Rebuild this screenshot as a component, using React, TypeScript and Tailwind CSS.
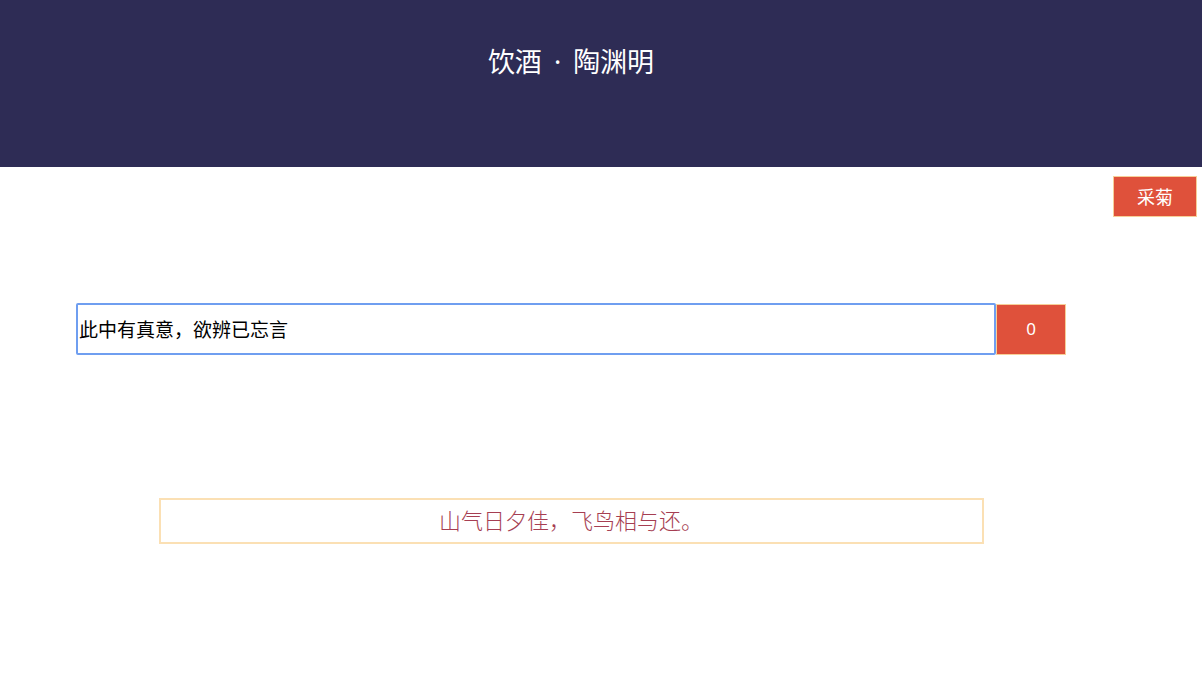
export default function App() {
  return (
    <div className="min-h-[690px] bg-white" style={{ fontFamily: '"Noto Sans", "Noto Sans CJK SC", sans-serif' }}>
      <header className="h-[167px] bg-[#2e2c55]">
        <h1 className="w-[1142px] pt-[44px] text-center text-[27px] leading-[36px] font-normal text-white">
          饮酒<span className="mx-[12px]">·</span>陶渊明
        </h1>
      </header>

      <div className="flex justify-end pr-[5px] pt-[9px]">
        <button className="w-[84px] h-[41px] bg-[#df513b] border border-[#f7cf98] text-white text-[18px] leading-none">
          采菊
        </button>
      </div>

      <div className="w-[1142px] flex flex-col items-center">
        <div className="mt-[86px] flex items-center">
          <input
            defaultValue="此中有真意，欲辨已忘言"
            className="w-[920px] h-[52px] border-2 border-[#6f9ef0] rounded-[2px] px-[1px] text-[19px] text-black outline-none"
          />
          <button className="w-[70px] h-[51px] bg-[#df513b] border border-[#f7cf98] text-white text-[17px]">
            0
          </button>
        </div>

        <div className="mt-[143px] w-[825px] h-[46px] border-2 border-[#fbe0b4] flex items-center justify-center">
          <span
            className="text-[22px] text-[#a63e52]"
            style={{ fontFamily: '"Liberation Serif", "Noto Sans CJK SC", serif', fontWeight: 300 }}
          >
            山气日夕佳，飞鸟相与还。
          </span>
        </div>
      </div>
    </div>
  );
}
